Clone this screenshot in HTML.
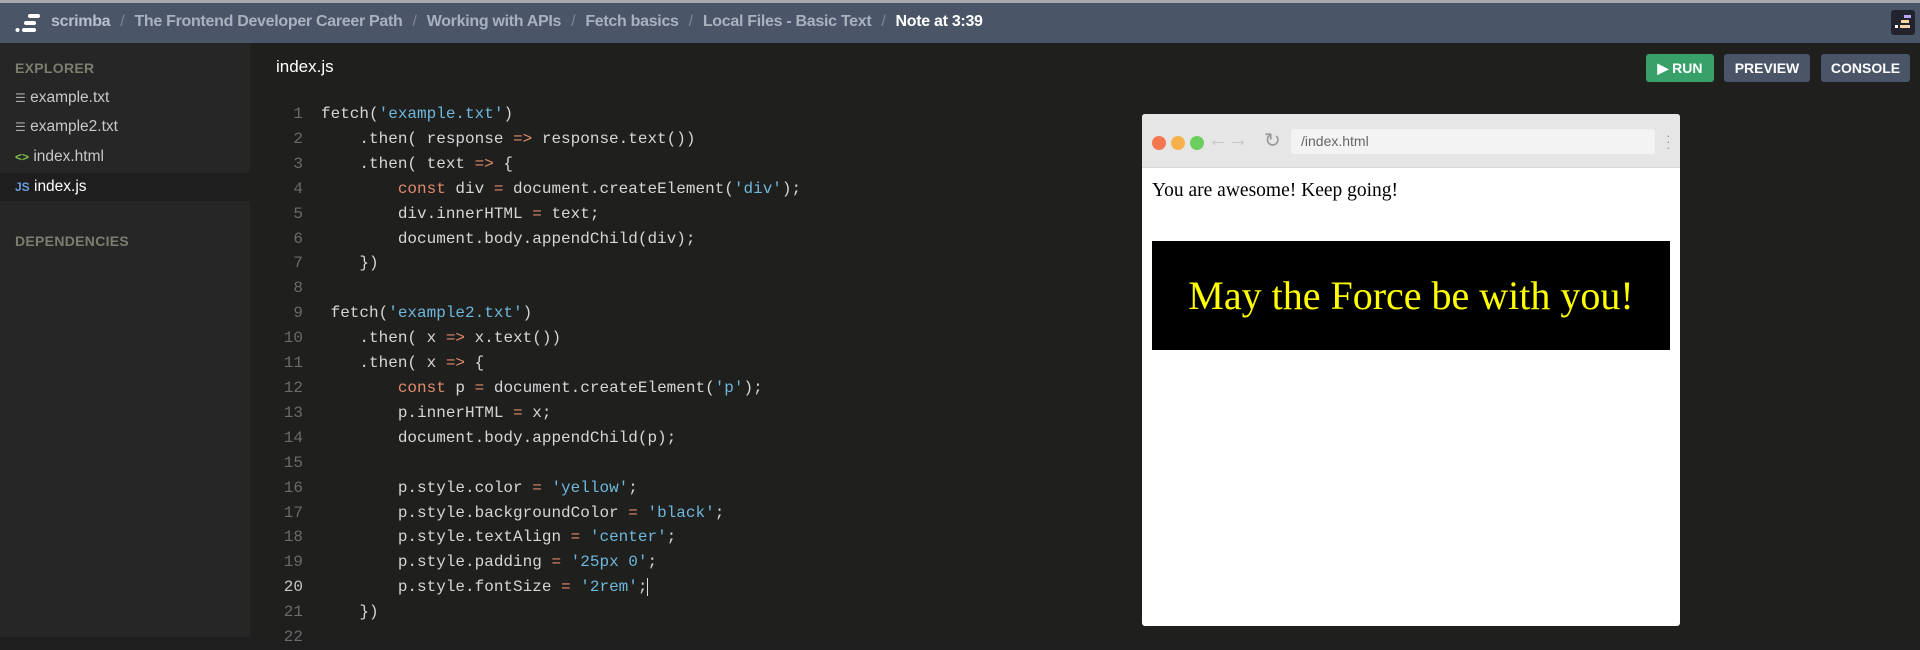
<!DOCTYPE html>
<html><head><style>
*{margin:0;padding:0;box-sizing:border-box}
body{width:1920px;height:637px;background:#1e1e1e;font-family:"Liberation Sans",sans-serif;overflow:hidden;position:relative}
.top{position:absolute;left:0;top:0;width:1920px;height:43px;background:#4a5568;border-top:3px solid #a8a8a8}
.crumbs{position:absolute;left:51px;top:10px;font-size:16px;font-weight:bold;color:#a9b1bf;white-space:nowrap;letter-spacing:-0.3px}
.crumbs .s{color:#7d8696;font-weight:normal;margin:0 10px}
.crumbs .w{color:#fff}
.side{position:absolute;left:0;top:43px;width:250px;height:594px;background:#262626}
.side .h{position:absolute;left:15px;font-size:14px;font-weight:bold;color:#7b7e6e;letter-spacing:0.3px}
.f{position:absolute;left:0;width:250px;height:28px;line-height:28px;padding-left:15px;font-size:15.5px;color:#c8c8c8}
.f.a{background:#1e1e1e;color:#fff}
.ed{position:absolute;left:250px;top:43px;width:1670px;height:594px;background:#1f1f1e}
.title{position:absolute;left:276px;top:57px;color:#fff;font-size:17px}
.btn{position:absolute;top:54px;height:28px;line-height:28px;border-radius:3px;color:#fff;font-weight:bold;font-size:14px;text-align:center}
.code{position:absolute;left:270px;top:102px;font-family:"Liberation Mono",monospace;font-size:16px;line-height:24.9px;color:#d6d6d6;white-space:pre}
.ln{display:inline-block;width:33px;text-align:right;color:#6a6a6a;margin-right:18px}
.s1{color:#6db8dc}.k{color:#e08a6c}.o{color:#e08a6c}
.pv{position:absolute;left:1142px;top:114px;width:538px;height:512px;background:#fff;border-radius:3px;overflow:hidden}
.bar{height:54px;background:#e6e6e6;border-bottom:1px solid #d8d8d8;position:relative}
.dot{position:absolute;top:22px;width:14px;height:14px;border-radius:50%}
.url{position:absolute;left:149px;top:15px;width:364px;height:25px;background:#f3f3f3;border-radius:3px;font-size:14px;color:#666;line-height:25px;padding-left:10px}
</style></head><body>
<div class="top">
<svg style="position:absolute;left:15px;top:9px" width="26" height="22" viewBox="0 0 26 22"><rect x="13" y="2" width="12" height="4" rx="2" fill="#fff"/><rect x="9" y="9" width="12" height="4" rx="2" fill="#fff"/><rect x="7" y="16" width="14" height="4" rx="2" fill="#fff"/><circle cx="2.5" cy="18" r="2" fill="#fff"/></svg>
<div class="crumbs"><span style="color:#b8bfcc">scrimba</span><span class="s">/</span>The Frontend Developer Career Path<span class="s">/</span>Working with APIs<span class="s">/</span>Fetch basics<span class="s">/</span>Local Files - Basic Text<span class="s">/</span><span class="w">Note at 3:39</span></div>
<div style="position:absolute;left:1891px;top:7px;width:24px;height:25px;background:#23232e;border-radius:3px"><div style="position:absolute;left:13px;top:5px;width:7px;height:3px;background:#b9a7f5"></div><div style="position:absolute;left:10px;top:10px;width:8px;height:3px;background:#f5d5a8"></div><div style="position:absolute;left:4px;top:15px;width:3px;height:3px;background:#fff"></div><div style="position:absolute;left:9px;top:15px;width:10px;height:3px;background:#f5d5a8"></div></div>
</div>
<div class="side">
<div class="h" style="top:17px">EXPLORER</div>
<div class="f" style="top:41px"><span style="color:#aaa;font-size:12px">☰</span> example.txt</div>
<div class="f" style="top:70px"><span style="color:#aaa;font-size:12px">☰</span> example2.txt</div>
<div class="f" style="top:100px"><span style="color:#7ec34c;font-size:12px;font-weight:bold">&lt;&gt;</span> index.html</div>
<div class="f a" style="top:130px"><span style="color:#6a9fe0;font-size:12px;font-weight:bold">JS</span> index.js</div>
<div class="h" style="top:190px">DEPENDENCIES</div>
</div>
<div class="ed"></div>
<div class="title">index.js</div>
<div class="btn" style="left:1646px;width:68px;background:#38a169">▶ RUN</div>
<div class="btn" style="left:1724px;width:86px;background:#4a5568">PREVIEW</div>
<div class="btn" style="left:1821px;width:89px;background:#4a5568">CONSOLE</div>
<div class="code"><span class="ln">1</span>fetch(<span class="s1">'example.txt'</span>)
<span class="ln">2</span>    .then( response <span class="o">=&gt;</span> response.text())
<span class="ln">3</span>    .then( text <span class="o">=&gt;</span> {
<span class="ln">4</span>        <span class="k">const</span> div <span class="o">=</span> document.createElement(<span class="s1">'div'</span>);
<span class="ln">5</span>        div.innerHTML <span class="o">=</span> text;
<span class="ln">6</span>        document.body.appendChild(div);
<span class="ln">7</span>    })
<span class="ln">8</span>
<span class="ln">9</span> fetch(<span class="s1">'example2.txt'</span>)
<span class="ln">10</span>    .then( x <span class="o">=&gt;</span> x.text())
<span class="ln">11</span>    .then( x <span class="o">=&gt;</span> {
<span class="ln">12</span>        <span class="k">const</span> p <span class="o">=</span> document.createElement(<span class="s1">'p'</span>);
<span class="ln">13</span>        p.innerHTML <span class="o">=</span> x;
<span class="ln">14</span>        document.body.appendChild(p);
<span class="ln">15</span>
<span class="ln">16</span>        p.style.color <span class="o">=</span> <span class="s1">'yellow'</span>;
<span class="ln">17</span>        p.style.backgroundColor <span class="o">=</span> <span class="s1">'black'</span>;
<span class="ln">18</span>        p.style.textAlign <span class="o">=</span> <span class="s1">'center'</span>;
<span class="ln">19</span>        p.style.padding <span class="o">=</span> <span class="s1">'25px 0'</span>;
<span class="ln" style="color:#c8c8c8">20</span>        p.style.fontSize <span class="o">=</span> <span class="s1">'2rem'</span>;<span style="border-left:1px solid #ddd"></span>
<span class="ln">21</span>    })
<span class="ln">22</span></div>
<div class="pv">
<div class="bar">
<div class="dot" style="left:10px;background:#f5774f"></div>
<div class="dot" style="left:29px;background:#f7b14c"></div>
<div class="dot" style="left:48px;background:#6bce5e"></div>
<div style="position:absolute;left:66px;top:15px;font-size:20px;color:#c4c4c4">←→</div>
<div style="position:absolute;left:122px;top:14px;font-size:20px;color:#999">↻</div>
<div class="url">/index.html</div>
<div style="position:absolute;left:524px;top:18px;font-size:14px;color:#999;line-height:6px">·<br>·<br>·</div>
</div>
<div style="position:absolute;left:10px;top:66px;font-family:'Liberation Serif',serif;font-size:19.5px;color:#000">You are awesome! Keep going!</div>
<div style="position:absolute;left:10px;top:127px;width:518px;height:109px;background:#000;color:#ff0;font-family:'Liberation Serif',serif;font-size:40px;text-align:center;line-height:109px">May the Force be with you!</div>
</div>
</body></html>
